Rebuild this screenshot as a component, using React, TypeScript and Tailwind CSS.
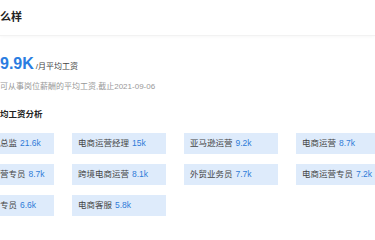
const jobs = [
  { name: "总监", pay: "21.6k" },
  { name: "电商运营经理", pay: "15k" },
  { name: "亚马逊运营", pay: "9.2k" },
  { name: "电商运营", pay: "8.7k" },
  { name: "营专员", pay: "8.7k" },
  { name: "跨境电商运营", pay: "8.1k" },
  { name: "外贸业务员", pay: "7.7k" },
  { name: "电商运营专员", pay: "7.2k" },
  { name: "专员", pay: "6.6k" },
  { name: "电商客服", pay: "5.8k" },
];

export default function App() {
  return (
    <div className="w-[375px] h-[240px] overflow-hidden bg-white font-['Liberation_Sans','Noto_Sans_CJK_SC',sans-serif] text-[#333]">
      <div className="h-[36px] flex items-center text-[11px] font-bold text-[#222] border-b border-[#f2f2f2] shadow-[0_1px_3px_rgba(0,0,0,0.03)]">
        么样
      </div>

      <div className="mt-[18px] flex items-baseline leading-[20px]">
        <span className="text-[16px] font-bold text-[#2b7de1]">9.9K</span>
        <span className="ml-[2px] text-[8px] text-[#444]">/月平均工资</span>
      </div>
      <p className="mt-[3.5px] text-[8px] leading-[12px] text-[#999]">
        可从事岗位薪酬的平均工资,截止2021-09-06
      </p>

      <h3 className="mt-[15px] text-[8.5px] leading-[12px] font-bold text-[#222]">均工资分析</h3>

      <div className="mt-[13px] grid grid-cols-[54px_94px_94px_94px] gap-x-[18px] gap-y-[10px]">
        {jobs.map((j, i) => (
          <div
            key={i}
            className={`h-[21px] flex items-center bg-[#deebfb] text-[8.5px] whitespace-nowrap ${i % 4 === 0 ? "" : "px-[6px]"}`}
          >
            <span className="text-[#444]">{j.name}</span>
            <span className="ml-[3px] text-[#2f7bd8]">{j.pay}</span>
          </div>
        ))}
      </div>
    </div>
  );
}
